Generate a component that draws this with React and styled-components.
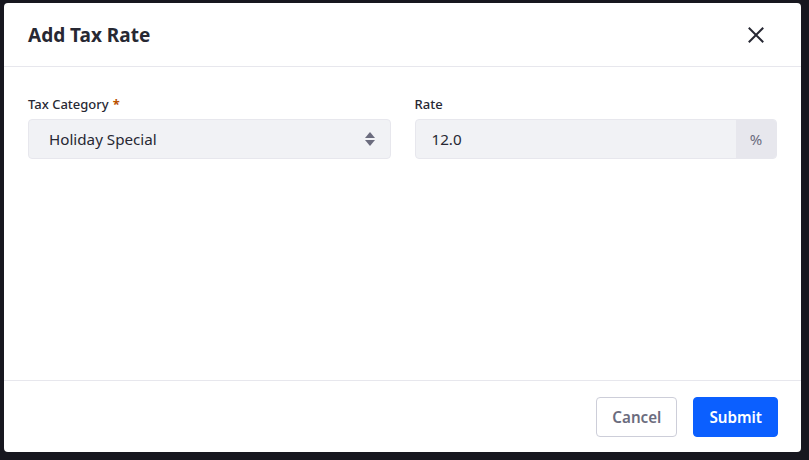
import React from "react";
import styled, { createGlobalStyle } from "styled-components";

const Global = createGlobalStyle`
  html, body { margin: 0; padding: 0; background: #15151c; }
  body { font-family: "Noto Sans", "Open Sans", sans-serif; color: #272833; }
  * { box-sizing: border-box; }
`;

const Backdrop = styled.div`
  width: 809px;
  height: 460px;
  background: #17171f;
  padding: 3px 8px 8px 4px;
  display: flex;
`;

const Modal = styled.div`
  flex: 1;
  background: #fff;
  border-radius: 4px;
  display: flex;
  flex-direction: column;
  overflow: hidden;
`;

const Header = styled.div`
  height: 64px;
  border-bottom: 1px solid #e7e7ed;
  display: flex;
  align-items: center;
  justify-content: space-between;
  padding: 0 33px 0 24px;
`;

const Title = styled.h1`
  margin: 0;
  font-size: 19px;
  font-weight: 700;
  color: #272833;
`;

const CloseButton = styled.button`
  width: 24px;
  height: 24px;
  border: 0;
  background: none;
  padding: 0;
  display: flex;
  align-items: center;
  justify-content: center;
  color: #272833;
`;

const Body = styled.div`
  flex: 1;
  padding: 27px 24px;
  display: grid;
  grid-template-columns: 1fr 1fr;
  column-gap: 24px;
  align-content: start;
`;

const Field = styled.div`
  display: flex;
  flex-direction: column;
`;

const Label = styled.label`
  font-size: 13px;
  font-weight: 500;
  line-height: 20px;
  margin-bottom: 5px;
  color: #272833;
`;

const Required = styled.span`
  color: #b95000;
  font-weight: 700;
  margin-left: 4px;
`;

const InputBox = styled.div`
  height: 40px;
  background: #f1f2f5;
  border: 1px solid #e7e7ed;
  border-radius: 4px;
  display: flex;
  align-items: center;
  overflow: hidden;
`;

const Value = styled.span`
  flex: 1;
  font-size: 15.2px;
  color: #272833;
  padding-left: ${(p) => p.$pad}px;
`;

const SelectArrow = styled.span`
  width: 40px;
  display: flex;
  justify-content: center;
`;

const Addon = styled.span`
  width: 40px;
  align-self: stretch;
  background: #e7e7ed;
  color: #6b6c7e;
  font-size: 15px;
  display: flex;
  align-items: center;
  justify-content: center;
`;

const Footer = styled.div`
  height: 72px;
  border-top: 1px solid #e7e7ed;
  display: flex;
  align-items: center;
  justify-content: flex-end;
  gap: 16px;
  padding: 0 23px;
`;

const Button = styled.button`
  height: 40px;
  padding: 0 15px;
  border-radius: 4px;
  font-family: inherit;
  font-size: 15.2px;
  font-weight: 600;
  border: 1px solid ${(p) => (p.$primary ? "#0b5fff" : "#cdced9")};
  background: ${(p) => (p.$primary ? "#0b5fff" : "#fff")};
  color: ${(p) => (p.$primary ? "#fff" : "#6b6c7e")};
`;

export default function App() {
  return (
    <>
      <Global />
      <Backdrop>
        <Modal>
          <Header>
            <Title>Add Tax Rate</Title>
            <CloseButton aria-label="Close">
              <svg width="16" height="16" viewBox="0 0 16 16">
                <path d="M1.5 1.5 L14.5 14.5 M14.5 1.5 L1.5 14.5" stroke="#272833" strokeWidth="2" strokeLinecap="square" />
              </svg>
            </CloseButton>
          </Header>
          <Body>
            <Field>
              <Label>
                Tax Category<Required>*</Required>
              </Label>
              <InputBox>
                <Value $pad={20}>Holiday Special</Value>
                <SelectArrow>
                  <svg width="10" height="16" viewBox="0 0 10 16">
                    <path d="M5 1 L10 7 H0 Z" fill="#6b6c7e" />
                    <path d="M0 9 H10 L5 15 Z" fill="#6b6c7e" />
                  </svg>
                </SelectArrow>
              </InputBox>
            </Field>
            <Field>
              <Label>Rate</Label>
              <InputBox>
                <Value $pad={16}>12.0</Value>
                <Addon>%</Addon>
              </InputBox>
            </Field>
          </Body>
          <Footer>
            <Button>Cancel</Button>
            <Button $primary>Submit</Button>
          </Footer>
        </Modal>
      </Backdrop>
    </>
  );
}
